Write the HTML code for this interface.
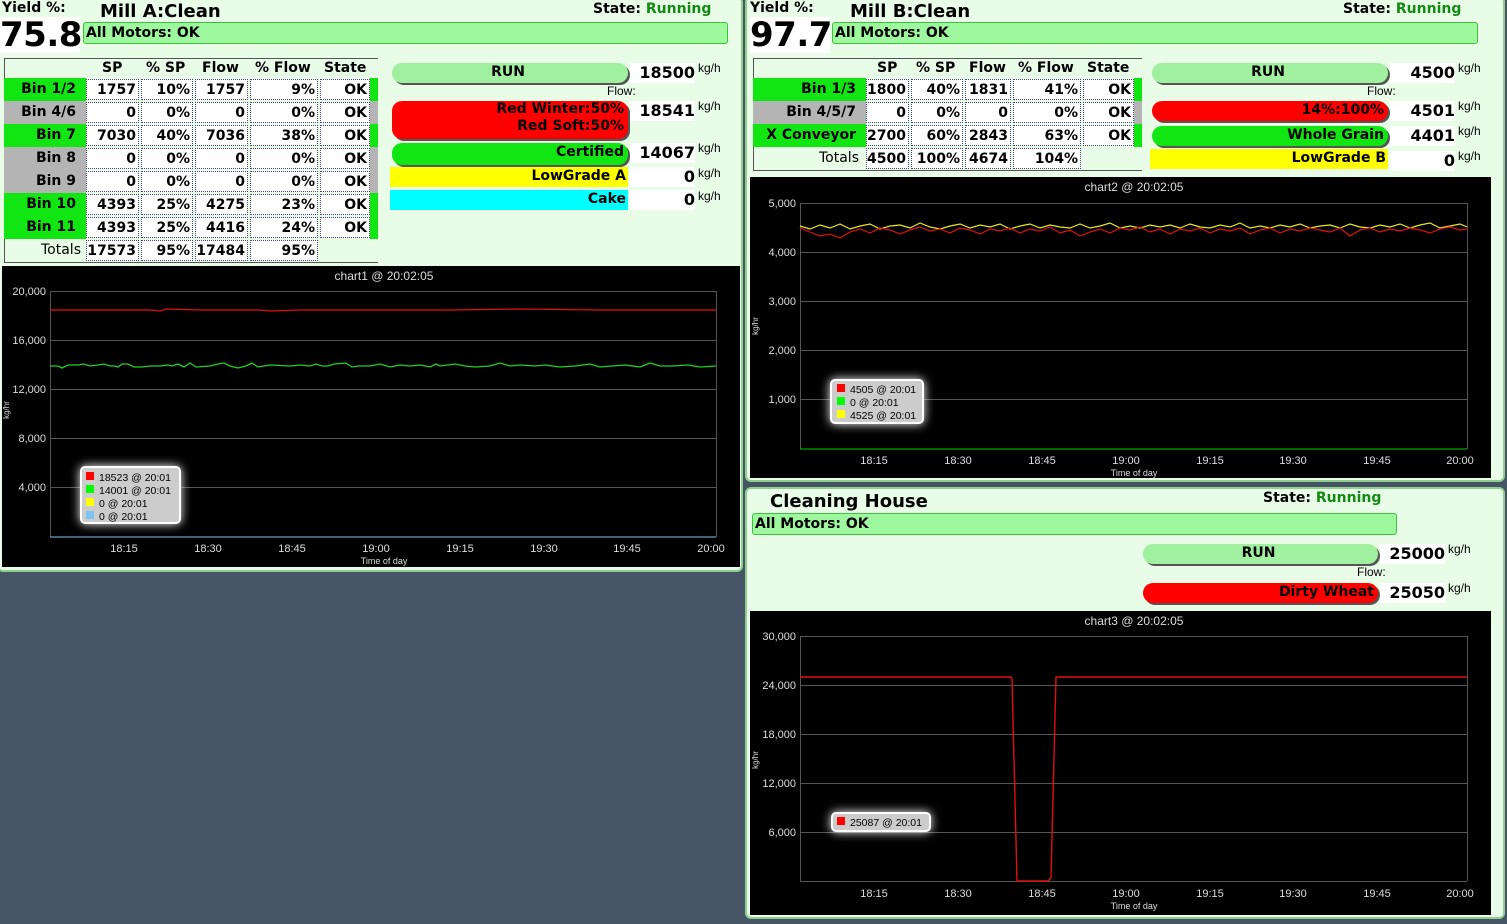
<!DOCTYPE html>
<html><head><meta charset="utf-8"><style>
*{margin:0;padding:0;box-sizing:border-box}
body{width:1507px;height:924px;background:#455565;position:relative;overflow:hidden;font-family:"DejaVu Sans","Liberation Sans",sans-serif;font-weight:bold;color:#000}
.a{position:absolute}
.panel{position:absolute;background:#e8fce8;border:2px solid #8fd08f;border-radius:6px}
.t{position:absolute;font-size:14px;white-space:nowrap}
.yb{position:absolute;background:#fff;font-size:34px;line-height:36px;letter-spacing:-0.5px}
.mot{position:absolute;background:#9ef89e;border:1px solid #3ec23e;border-radius:3px;font-size:14px;line-height:20px;padding-left:2px}
.st{position:absolute;font-size:14px}
.st span{color:#138a13}
.tbl{position:absolute;border:1px solid #555;border-right:none}
.c{position:absolute;height:21px;background:#fff;border:1px dotted #447;font-size:14px;line-height:20px;text-align:right;padding-right:2px}
.lab{position:absolute;height:23px;font-size:14px;line-height:22px;text-align:right;padding-right:10px}
.g{background:#12e612}.gr{background:#b4b4b4}
.hd{position:absolute;font-size:14px;top:2px}
.btn{position:absolute;border-radius:10px;box-shadow:2px 2px 0 #555;font-size:14px;text-align:right;padding-right:4px;line-height:19px}
.val{position:absolute;background:#fff;font-size:16px;text-align:right;line-height:20px;height:20px}
.u{position:absolute;font-size:12px;font-weight:normal;font-family:"Liberation Sans",sans-serif}
.fl{position:absolute;font-size:12px;font-weight:normal;font-family:"Liberation Sans",sans-serif}
svg text{font-family:"Liberation Sans",sans-serif;font-weight:normal}
</style></head><body>

<!-- Panel A -->
<div class="panel" style="left:-3px;top:-4px;width:746px;height:576px"></div>
<div class="t" style="left:2px;top:0px">Yield %:</div>
<div class="yb" style="left:0;top:17px;width:80px">75.8</div>
<div class="t" style="left:100px;top:1px;font-size:18px">Mill A:Clean</div>
<div class="st" style="left:593px;top:1px">State: <span>Running</span></div>
<div class="mot" style="left:83px;top:22px;width:645px;height:22px">All Motors: OK</div>

<div class="tbl" style="left:4px;top:58px;width:374px;height:205px"></div>
<div class="hd" style="left:102px;top:60px">SP</div>
<div class="hd" style="left:146px;top:60px">% SP</div>
<div class="hd" style="left:202px;top:60px">Flow</div>
<div class="hd" style="left:255px;top:60px">% Flow</div>
<div class="hd" style="left:324px;top:60px">State</div>

<!-- rows panel A -->
<div class="lab g" style="left:4px;top:78px;width:82px">Bin 1/2</div><div class="a g" style="left:370px;top:78px;width:8px;height:23px"></div>
<div class="lab gr" style="left:4px;top:101px;width:82px">Bin 4/6</div><div class="a gr" style="left:370px;top:101px;width:8px;height:23px"></div>
<div class="lab g" style="left:4px;top:124px;width:82px">Bin 7</div><div class="a g" style="left:370px;top:124px;width:8px;height:23px"></div>
<div class="lab gr" style="left:4px;top:147px;width:82px">Bin 8</div><div class="a gr" style="left:370px;top:147px;width:8px;height:23px"></div>
<div class="lab gr" style="left:4px;top:170px;width:82px">Bin 9</div><div class="a gr" style="left:370px;top:170px;width:8px;height:23px"></div>
<div class="lab g" style="left:4px;top:193px;width:82px">Bin 10</div><div class="a g" style="left:370px;top:193px;width:8px;height:23px"></div>
<div class="lab g" style="left:4px;top:216px;width:82px">Bin 11</div><div class="a g" style="left:370px;top:216px;width:8px;height:23px"></div>
<div class="lab" style="left:4px;top:239px;width:82px;font-weight:normal;font-family:'DejaVu Sans',sans-serif;padding-right:5px">Totals</div>

<div id="ta"></div>

<div class="btn" style="left:392px;top:63px;width:236px;height:20px;background:#a0f0a0;text-align:center">RUN</div>
<div class="val" style="left:630px;top:63px;width:65px">18500</div><div class="u" style="left:698px;top:61px">kg/h</div>
<div class="fl" style="left:607px;top:84px">Flow:</div>
<div class="btn" style="left:392px;top:101px;width:236px;height:38px;background:#f00;line-height:17px">Red Winter:50%<br>Red Soft:50%</div>
<div class="val" style="left:630px;top:101px;width:65px">18541</div><div class="u" style="left:698px;top:99px">kg/h</div>
<div class="btn" style="left:392px;top:143px;width:236px;height:22px;background:#12e612">Certified</div>
<div class="val" style="left:630px;top:143px;width:65px">14067</div><div class="u" style="left:698px;top:141px">kg/h</div>
<div class="a" style="left:390px;top:167px;width:238px;height:20px;background:#ff0;font-size:14px;text-align:right;padding-right:2px;line-height:19px">LowGrade A</div>
<div class="val" style="left:630px;top:167px;width:65px">0</div><div class="u" style="left:698px;top:166px">kg/h</div>
<div class="a" style="left:390px;top:190px;width:238px;height:20px;background:#0ff;font-size:14px;text-align:right;padding-right:2px;line-height:19px">Cake</div>
<div class="val" style="left:630px;top:190px;width:65px">0</div><div class="u" style="left:698px;top:189px">kg/h</div>

<!-- chart1 -->
<svg class="a" style="left:2px;top:266px" width="738" height="301" viewBox="2 266 738 301">
<rect x="2" y="266" width="738" height="301" fill="#000"/>
<text x="384" y="280" fill="#ddd" font-size="12" text-anchor="middle">chart1 @ 20:02:05</text>
<g stroke="#555" stroke-width="1">
<line x1="50" y1="291.5" x2="716" y2="291.5"/><line x1="50" y1="340.5" x2="716" y2="340.5"/><line x1="50" y1="389.5" x2="716" y2="389.5"/><line x1="50" y1="438.5" x2="716" y2="438.5"/><line x1="50" y1="487.5" x2="716" y2="487.5"/>
<line x1="50.5" y1="291" x2="50.5" y2="537"/><line x1="716.5" y1="291" x2="716.5" y2="537"/>
</g>
<g fill="#ddd" font-size="11" text-anchor="end">
<text x="46" y="295">20,000</text><text x="46" y="344">16,000</text><text x="46" y="393">12,000</text><text x="46" y="442">8,000</text><text x="46" y="491">4,000</text></g>
<g fill="#ddd" font-size="11" text-anchor="middle">
<text x="124" y="552">18:15</text><text x="208" y="552">18:30</text><text x="292" y="552">18:45</text><text x="376" y="552">19:00</text><text x="460" y="552">19:15</text><text x="544" y="552">19:30</text><text x="627" y="552">19:45</text><text x="711" y="552">20:00</text>
<text x="384" y="564" font-size="9">Time of day</text></g>
<text x="9" y="410" fill="#ddd" font-size="8" transform="rotate(-90 9 410)" text-anchor="middle">kg/hr</text>
<line x1="50" y1="537" x2="716" y2="537" stroke="#7bc3f0"/>
<polyline fill="none" stroke="#e01010" stroke-width="1.3" points="50,310 150,310 160,311 166,309 200,310 260,310 270,311 300,310 400,310 450,310 520,309 600,310 716,310"/>
<polyline fill="none" stroke="#20d020" stroke-width="1.3" points="50,366 58,366 62,368 68,365 78,365 84,364 90,366 98,365 104,364 110,366 115,366 118,367 122,364 128,364 134,367 142,367 150,366 160,366 168,365 172,366 178,364 184,367 190,363 196,367 210,366 218,364 224,363 230,366 238,368 246,366 252,363 258,367 270,365 290,366 300,365 310,366 316,364 322,366 328,366 334,364 346,363 352,367 358,366 370,366 380,364 390,367 400,365 410,366 420,365 430,367 436,364 440,366 455,364 465,366 475,367 490,366 500,363 510,366 520,365 535,366 545,365 560,367 575,366 590,364 600,367 612,366 625,365 640,367 650,363 660,366 672,366 688,365 700,367 716,366"/>
<rect x="81" y="467" width="99" height="56" rx="4" fill="#ccc" stroke="#fff" stroke-width="2" style="filter:drop-shadow(0 0 5px #fff)"/>
<rect x="86" y="472" width="8" height="8" fill="#f00"/><rect x="86" y="485" width="8" height="8" fill="#0f0"/><rect x="86" y="498" width="8" height="8" fill="#ff0"/><rect x="86" y="511" width="8" height="8" fill="#7bc3f0"/>
<g font-size="10.5" fill="#000"><text x="99" y="481">18523 @ 20:01</text><text x="99" y="494">14001 @ 20:01</text><text x="99" y="507">0 @ 20:01</text><text x="99" y="520">0 @ 20:01</text></g>
</svg>

<!-- Panel B -->
<div class="panel" style="left:745px;top:-4px;width:760px;height:486px"></div>
<div class="t" style="left:750px;top:0px">Yield %:</div>
<div class="yb" style="left:750px;top:17px;width:80px">97.7</div>
<div class="t" style="left:850px;top:1px;font-size:18px">Mill B:Clean</div>
<div class="st" style="left:1343px;top:1px">State: <span>Running</span></div>
<div class="mot" style="left:832px;top:22px;width:646px;height:22px">All Motors: OK</div>

<div class="tbl" style="left:753px;top:58px;width:389px;height:113px"></div>
<div class="hd" style="left:877px;top:60px">SP</div>
<div class="hd" style="left:916px;top:60px">% SP</div>
<div class="hd" style="left:969px;top:60px">Flow</div>
<div class="hd" style="left:1018px;top:60px">% Flow</div>
<div class="hd" style="left:1087px;top:60px">State</div>
<div class="lab g" style="left:753px;top:78px;width:113px">Bin 1/3</div><div class="a g" style="left:1134px;top:78px;width:8px;height:23px"></div>
<div class="lab gr" style="left:753px;top:101px;width:113px">Bin 4/5/7</div><div class="a gr" style="left:1134px;top:101px;width:8px;height:23px"></div>
<div class="lab g" style="left:753px;top:124px;width:113px">X Conveyor</div><div class="a g" style="left:1134px;top:124px;width:8px;height:23px"></div>
<div class="lab" style="left:753px;top:147px;width:113px;font-weight:normal;padding-right:7px">Totals</div>

<div class="btn" style="left:1152px;top:63px;width:236px;height:20px;background:#a0f0a0;text-align:center">RUN</div>
<div class="val" style="left:1390px;top:63px;width:65px">4500</div><div class="u" style="left:1458px;top:61px">kg/h</div>
<div class="fl" style="left:1367px;top:84px">Flow:</div>
<div class="btn" style="left:1152px;top:101px;width:236px;height:20px;background:#f00">14%:100%</div>
<div class="val" style="left:1390px;top:101px;width:65px">4501</div><div class="u" style="left:1458px;top:99px">kg/h</div>
<div class="btn" style="left:1152px;top:126px;width:236px;height:20px;background:#12e612">Whole Grain</div>
<div class="val" style="left:1390px;top:126px;width:65px">4401</div><div class="u" style="left:1458px;top:124px">kg/h</div>
<div class="a" style="left:1150px;top:149px;width:238px;height:20px;background:#ff0;font-size:14px;text-align:right;padding-right:2px;line-height:19px">LowGrade B</div>
<div class="val" style="left:1390px;top:151px;width:65px">0</div><div class="u" style="left:1458px;top:149px">kg/h</div>

<svg class="a" style="left:750px;top:177px" width="741" height="301" viewBox="750 177 741 301">
<rect x="750" y="177" width="741" height="301" fill="#000"/>
<text x="1134" y="191" fill="#ddd" font-size="12" text-anchor="middle">chart2 @ 20:02:05</text>
<g stroke="#555"><line x1="800" y1="203.5" x2="1467" y2="203.5"/><line x1="800" y1="252.5" x2="1467" y2="252.5"/><line x1="800" y1="301.5" x2="1467" y2="301.5"/><line x1="800" y1="350.5" x2="1467" y2="350.5"/><line x1="800" y1="399.5" x2="1467" y2="399.5"/><line x1="800.5" y1="203" x2="800.5" y2="449"/><line x1="1467.5" y1="203" x2="1467.5" y2="449"/></g>
<g fill="#ddd" font-size="11" text-anchor="end"><text x="796" y="207">5,000</text><text x="796" y="256">4,000</text><text x="796" y="305">3,000</text><text x="796" y="354">2,000</text><text x="796" y="403">1,000</text></g>
<g fill="#ddd" font-size="11" text-anchor="middle"><text x="874" y="464">18:15</text><text x="958" y="464">18:30</text><text x="1042" y="464">18:45</text><text x="1126" y="464">19:00</text><text x="1210" y="464">19:15</text><text x="1293" y="464">19:30</text><text x="1377" y="464">19:45</text><text x="1460" y="464">20:00</text><text x="1134" y="476" font-size="9">Time of day</text></g>
<text x="758" y="326" fill="#ddd" font-size="8" transform="rotate(-90 758 326)" text-anchor="middle">kg/hr</text>
<line x1="800" y1="449" x2="1467" y2="449" stroke="#0c0"/>
<polyline fill="none" stroke="#e8e820" stroke-width="1.2" points="800,226 810,229 820,225 830,228 840,224 850,229 860,226 870,224 880,229 890,226 900,225 910,228 920,223 930,227 940,229 950,226 960,224 970,228 980,225 990,227 1000,224 1010,229 1020,226 1030,224 1040,228 1050,225 1060,227 1070,228 1080,224 1090,228 1100,226 1110,223 1120,228 1130,226 1140,228 1150,225 1160,227 1170,225 1180,228 1190,224 1200,227 1210,228 1220,225 1230,227 1240,223 1250,228 1260,226 1270,228 1280,225 1290,227 1300,224 1310,228 1320,226 1330,225 1340,228 1350,224 1360,227 1370,228 1380,225 1390,227 1400,224 1410,228 1420,225 1430,223 1440,228 1450,226 1460,224 1467,227"/>
<polyline fill="none" stroke="#e01010" stroke-width="1.2" points="800,228 810,232 820,236 830,234 840,238 850,232 860,229 870,233 880,228 890,230 900,234 910,230 920,227 930,231 940,229 950,233 960,228 970,230 980,234 990,229 1000,231 1010,228 1020,233 1030,229 1040,231 1050,227 1060,233 1070,230 1080,236 1090,232 1100,229 1110,233 1120,228 1130,230 1140,227 1150,232 1160,229 1170,234 1180,229 1190,231 1200,228 1210,233 1220,229 1230,231 1240,228 1250,234 1260,230 1270,228 1280,233 1290,229 1300,231 1310,228 1320,230 1330,232 1340,228 1350,236 1360,230 1370,228 1380,232 1390,229 1400,231 1410,228 1420,230 1430,233 1440,229 1450,227 1460,230 1467,229"/>
<rect x="831" y="380" width="92" height="43" rx="4" fill="#ccc" stroke="#fff" stroke-width="2" style="filter:drop-shadow(0 0 5px #fff)"/>
<rect x="837" y="384" width="8" height="8" fill="#f00"/><rect x="837" y="397" width="8" height="8" fill="#0f0"/><rect x="837" y="410" width="8" height="8" fill="#ff0"/>
<g font-size="10.5"><text x="850" y="393">4505 @ 20:01</text><text x="850" y="406">0 @ 20:01</text><text x="850" y="419">4525 @ 20:01</text></g>
</svg>

<!-- Panel C -->
<div class="panel" style="left:745px;top:487px;width:760px;height:432px"></div>
<div class="t" style="left:770px;top:491px;font-size:18px">Cleaning House</div>
<div class="st" style="left:1263px;top:490px">State: <span>Running</span></div>
<div class="mot" style="left:752px;top:513px;width:645px;height:22px">All Motors: OK</div>
<div class="btn" style="left:1143px;top:544px;width:235px;height:20px;background:#a0f0a0;text-align:center">RUN</div>
<div class="val" style="left:1380px;top:544px;width:65px">25000</div><div class="u" style="left:1448px;top:542px">kg/h</div>
<div class="fl" style="left:1357px;top:565px">Flow:</div>
<div class="btn" style="left:1143px;top:583px;width:235px;height:20px;background:#f00">Dirty Wheat</div>
<div class="val" style="left:1380px;top:583px;width:65px">25050</div><div class="u" style="left:1448px;top:581px">kg/h</div>

<svg class="a" style="left:750px;top:611px" width="741" height="304" viewBox="750 611 741 304">
<rect x="750" y="611" width="741" height="304" fill="#000"/>
<text x="1134" y="625" fill="#ddd" font-size="12" text-anchor="middle">chart3 @ 20:02:05</text>
<g stroke="#555"><line x1="800" y1="636.5" x2="1467" y2="636.5"/><line x1="800" y1="685.5" x2="1467" y2="685.5"/><line x1="800" y1="734.5" x2="1467" y2="734.5"/><line x1="800" y1="783.5" x2="1467" y2="783.5"/><line x1="800" y1="832.5" x2="1467" y2="832.5"/><line x1="800" y1="881.5" x2="1467" y2="881.5"/><line x1="800.5" y1="636" x2="800.5" y2="881"/><line x1="1467.5" y1="636" x2="1467.5" y2="881"/></g>
<g fill="#ddd" font-size="11" text-anchor="end"><text x="796" y="640">30,000</text><text x="796" y="689">24,000</text><text x="796" y="738">18,000</text><text x="796" y="787">12,000</text><text x="796" y="836">6,000</text></g>
<g fill="#ddd" font-size="11" text-anchor="middle"><text x="874" y="897">18:15</text><text x="958" y="897">18:30</text><text x="1042" y="897">18:45</text><text x="1126" y="897">19:00</text><text x="1210" y="897">19:15</text><text x="1293" y="897">19:30</text><text x="1377" y="897">19:45</text><text x="1460" y="897">20:00</text><text x="1134" y="909" font-size="9">Time of day</text></g>
<text x="758" y="760" fill="#ddd" font-size="8" transform="rotate(-90 758 760)" text-anchor="middle">kg/hr</text>
<polyline fill="none" stroke="#e01010" stroke-width="1.4" points="800,677 1011,677 1012,679 1017,881 1048,881 1051,878 1056,677 1467,677"/>
<rect x="832" y="813" width="98" height="18" rx="4" fill="#ccc" stroke="#fff" stroke-width="2" style="filter:drop-shadow(0 0 5px #fff)"/>
<rect x="837" y="817" width="8" height="8" fill="#f00"/>
<text x="850" y="826" font-size="10.5">25087 @ 20:01</text>
</svg>

<!-- table cells -->
<div class="c" style="left:86px;top:79px;width:53px">1757</div><div class="c" style="left:141px;top:79px;width:52px">10%</div><div class="c" style="left:195px;top:79px;width:53px">1757</div><div class="c" style="left:250px;top:79px;width:68px">9%</div><div class="c" style="left:320px;top:79px;width:50px">OK</div>
<div class="c" style="left:86px;top:102px;width:53px">0</div><div class="c" style="left:141px;top:102px;width:52px">0%</div><div class="c" style="left:195px;top:102px;width:53px">0</div><div class="c" style="left:250px;top:102px;width:68px">0%</div><div class="c" style="left:320px;top:102px;width:50px">OK</div>
<div class="c" style="left:86px;top:125px;width:53px">7030</div><div class="c" style="left:141px;top:125px;width:52px">40%</div><div class="c" style="left:195px;top:125px;width:53px">7036</div><div class="c" style="left:250px;top:125px;width:68px">38%</div><div class="c" style="left:320px;top:125px;width:50px">OK</div>
<div class="c" style="left:86px;top:148px;width:53px">0</div><div class="c" style="left:141px;top:148px;width:52px">0%</div><div class="c" style="left:195px;top:148px;width:53px">0</div><div class="c" style="left:250px;top:148px;width:68px">0%</div><div class="c" style="left:320px;top:148px;width:50px">OK</div>
<div class="c" style="left:86px;top:171px;width:53px">0</div><div class="c" style="left:141px;top:171px;width:52px">0%</div><div class="c" style="left:195px;top:171px;width:53px">0</div><div class="c" style="left:250px;top:171px;width:68px">0%</div><div class="c" style="left:320px;top:171px;width:50px">OK</div>
<div class="c" style="left:86px;top:194px;width:53px">4393</div><div class="c" style="left:141px;top:194px;width:52px">25%</div><div class="c" style="left:195px;top:194px;width:53px">4275</div><div class="c" style="left:250px;top:194px;width:68px">23%</div><div class="c" style="left:320px;top:194px;width:50px">OK</div>
<div class="c" style="left:86px;top:217px;width:53px">4393</div><div class="c" style="left:141px;top:217px;width:52px">25%</div><div class="c" style="left:195px;top:217px;width:53px">4416</div><div class="c" style="left:250px;top:217px;width:68px">24%</div><div class="c" style="left:320px;top:217px;width:50px">OK</div>
<div class="c" style="left:86px;top:240px;width:53px">17573</div><div class="c" style="left:141px;top:240px;width:52px">95%</div><div class="c" style="left:195px;top:240px;width:53px">17484</div><div class="c" style="left:250px;top:240px;width:68px">95%</div>

<div class="c" style="left:866px;top:79px;width:43px">1800</div><div class="c" style="left:911px;top:79px;width:52px">40%</div><div class="c" style="left:965px;top:79px;width:46px">1831</div><div class="c" style="left:1013px;top:79px;width:68px">41%</div><div class="c" style="left:1083px;top:79px;width:51px">OK</div>
<div class="c" style="left:866px;top:102px;width:43px">0</div><div class="c" style="left:911px;top:102px;width:52px">0%</div><div class="c" style="left:965px;top:102px;width:46px">0</div><div class="c" style="left:1013px;top:102px;width:68px">0%</div><div class="c" style="left:1083px;top:102px;width:51px">OK</div>
<div class="c" style="left:866px;top:125px;width:43px">2700</div><div class="c" style="left:911px;top:125px;width:52px">60%</div><div class="c" style="left:965px;top:125px;width:46px">2843</div><div class="c" style="left:1013px;top:125px;width:68px">63%</div><div class="c" style="left:1083px;top:125px;width:51px">OK</div>
<div class="c" style="left:866px;top:148px;width:43px">4500</div><div class="c" style="left:911px;top:148px;width:52px">100%</div><div class="c" style="left:965px;top:148px;width:46px">4674</div><div class="c" style="left:1013px;top:148px;width:68px">104%</div>
</body></html>
